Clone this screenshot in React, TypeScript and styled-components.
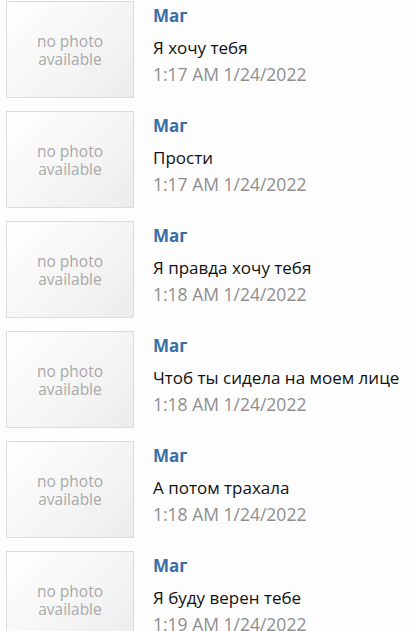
import styled, { createGlobalStyle } from 'styled-components';

const GlobalStyle = createGlobalStyle`
  body {
    margin: 0;
    background: #fdfdfd;
    font-family: 'Open Sans', 'Noto Sans', sans-serif;
  }
`;

const List = styled.div`
  display: flex;
  flex-direction: column;
  gap: 13px;
  padding: 1px 0 0 6px;
  height: 631px;
  overflow: hidden;
`;

const Row = styled.div`
  display: flex;
  align-items: flex-start;
  gap: 19px;
`;

const NoPhoto = styled.div`
  width: 126px;
  height: 95px;
  flex-shrink: 0;
  border: 1px solid #dcdcdc;
  background: linear-gradient(135deg, #ffffff 0%, #f7f7f7 45%, #ececec 100%);
  display: flex;
  flex-direction: column;
  align-items: center;
  justify-content: center;
  color: #a9a9a9;
  font-size: 15.5px;
`;

const PhotoLine = styled.span`
  display: block;
  line-height: 18px;
`;

const Info = styled.div`
  display: flex;
  flex-direction: column;
  padding-top: 3px;
`;

const Author = styled.div`
  color: #3a6ea6;
  font-weight: 700;
  font-size: 17px;
  line-height: 24px;
  margin-bottom: 8px;
`;

const Message = styled.div`
  color: #111;
  font-size: 17px;
  line-height: 24px;
  white-space: nowrap;
`;

const Time = styled.div`
  color: #8e8e8e;
  font-size: 17.5px;
  line-height: 29px;
`;

const messages = [
  { text: 'Я хочу тебя', time: '1:17 AM 1/24/2022' },
  { text: 'Прости', time: '1:17 AM 1/24/2022' },
  { text: 'Я правда хочу тебя', time: '1:18 AM 1/24/2022' },
  { text: 'Чтоб ты сидела на моем лице', time: '1:18 AM 1/24/2022' },
  { text: 'А потом трахала', time: '1:18 AM 1/24/2022' },
  { text: 'Я буду верен тебе', time: '1:19 AM 1/24/2022' },
];

export default function App() {
  return (
    <>
      <GlobalStyle />
      <List>
        {messages.map((m, i) => (
          <Row key={i}>
            <NoPhoto>
              <PhotoLine>no photo</PhotoLine>
              <PhotoLine>available</PhotoLine>
            </NoPhoto>
            <Info>
              <Author>Маг</Author>
              <Message>{m.text}</Message>
              <Time>{m.time}</Time>
            </Info>
          </Row>
        ))}
      </List>
    </>
  );
}
